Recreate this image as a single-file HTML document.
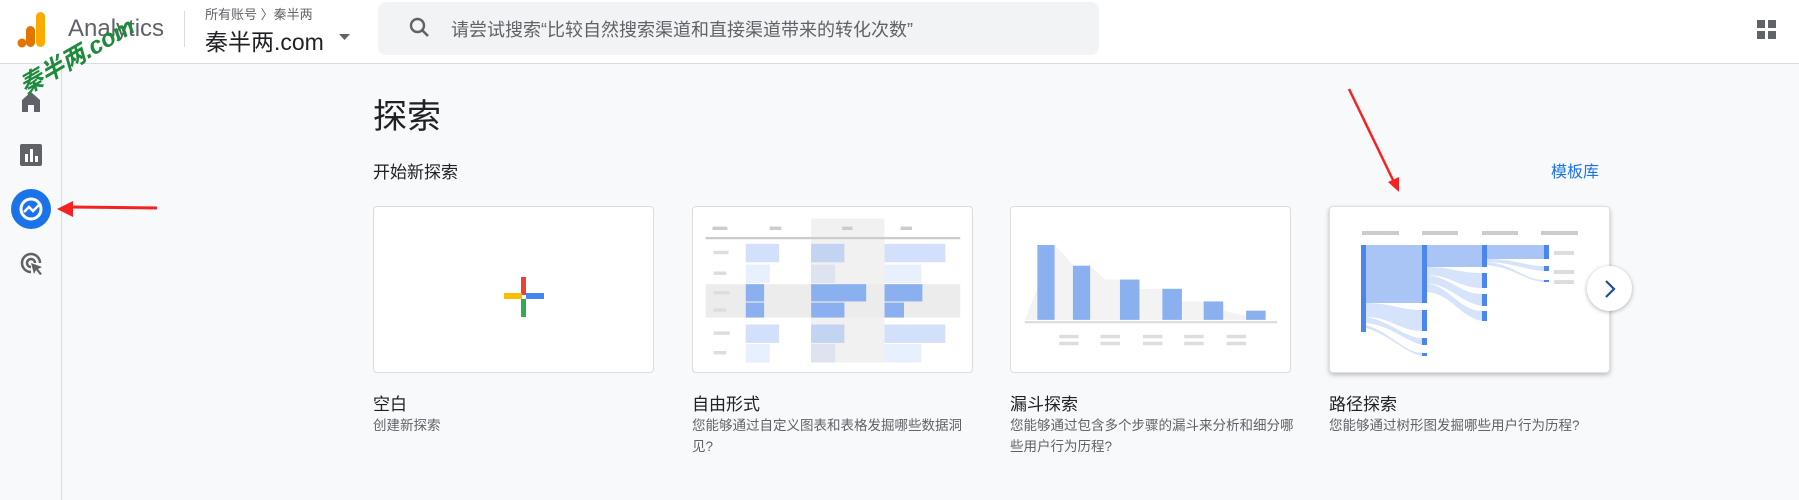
<!DOCTYPE html>
<html><head><meta charset="utf-8"><style>
*{margin:0;padding:0;box-sizing:border-box}
body{width:1799px;height:500px;overflow:hidden;background:#f8f9fa;font-family:"Liberation Sans","Noto Sans CJK SC",sans-serif;position:relative;color:#202124}
.hdr{position:absolute;left:0;top:0;width:1799px;height:64px;background:#fff;border-bottom:1px solid #dadce0}
.side{position:absolute;left:0;top:64px;width:62px;height:436px;border-right:1px solid #dadce0;background:#f8f9fa}
.abs{position:absolute;white-space:nowrap}
.card{position:absolute;top:206px;width:281px;height:167px;background:#fff;border:1px solid #dadce0;border-radius:4px;overflow:hidden}
.ct{position:absolute;top:390px;font-size:17px;color:#202124}
.cd{position:absolute;top:415px;font-size:13.5px;color:#5f6368;line-height:21px;width:290px}
</style></head><body>
<div class="hdr">
<svg class="abs" style="left:17px;top:12px" width="30" height="36" viewBox="0 0 30 36"><rect x="19" y="0" width="9" height="35" rx="4.5" fill="#f9ab00"/><rect x="9" y="14" width="9" height="21" rx="4.5" fill="#e37400"/><circle cx="5" cy="31" r="4.5" fill="#e37400"/></svg>
<div class="abs" style="left:68px;top:15px;font-size:24px;color:#5f6368">Analytics</div>
<div class="abs" style="left:184px;top:11px;width:1px;height:36px;background:#dadce0"></div>
<div class="abs" style="left:205px;top:4px;font-size:13px;color:#5f6368">所有账号 〉秦半两</div>
<div class="abs" style="left:205px;top:23px;font-size:23px;color:#202124">秦半两.com</div>
<svg class="abs" style="left:339px;top:34px" width="12" height="7"><path d="M0 0h11l-5.5 6z" fill="#5f6368"/></svg>
<div class="abs" style="left:378px;top:2px;width:721px;height:53px;background:#f1f3f4;border-radius:8px"></div>
<svg class="abs" style="left:408px;top:16px" width="24" height="24" viewBox="0 0 24 24"><circle cx="9.5" cy="9.5" r="6.5" stroke="#5f6368" stroke-width="2.4" fill="none"/><path d="M14 14l6 6" stroke="#5f6368" stroke-width="2.6"/></svg>
<div class="abs" style="left:451px;top:16px;font-size:18px;color:#5f6368">请尝试搜索“比较自然搜索渠道和直接渠道带来的转化次数”</div>
<svg class="abs" style="left:1757px;top:20px" width="19" height="19"><g fill="#5f6368"><rect width="8" height="8"/><rect x="11" width="8" height="8"/><rect y="11" width="8" height="8"/><rect x="11" y="11" width="8" height="8"/></g></svg>
</div>
<div class="side"></div>
<svg class="abs" style="left:21px;top:91px" width="20" height="22" viewBox="0 0 20 22"><path d="M10 1L1 9v12h6v-7h6v7h6V9z" fill="#5f6368"/></svg>
<svg class="abs" style="left:20px;top:144px" width="22" height="22"><rect width="22" height="22" rx="2" fill="#5f6368"/><rect x="5" y="10" width="3" height="8" fill="#fff"/><rect x="10" y="5" width="3" height="13" fill="#fff"/><rect x="15" y="12" width="3" height="6" fill="#fff"/></svg>
<svg class="abs" style="left:10px;top:188px" width="42" height="42" viewBox="0 0 42 42"><circle cx="21" cy="21" r="20" fill="#1a73e8"/><circle cx="21" cy="21" r="10" fill="none" stroke="#fff" stroke-width="3"/><path d="M14 24l5-5 4 4 6-6" stroke="#fff" stroke-width="2.5" fill="none"/></svg>
<svg class="abs" style="left:20px;top:252px" width="24" height="24" viewBox="0 0 24 24"><path d="M11 20a9 9 0 1 1 9-9" stroke="#5f6368" stroke-width="2.5" fill="none"/><path d="M11 15a4 4 0 1 1 4-4" stroke="#5f6368" stroke-width="2.5" fill="none"/><path d="M11 11l11 4-4 2 4 5-2 1-4-5-2 4z" fill="#5f6368"/></svg>
<div class="abs" style="left:22px;top:75px;font-size:24px;line-height:28px;font-weight:bold;color:#1e8a3c;transform:rotate(-30deg);transform-origin:0 50%;font-style:italic">秦半两.com</div>
<svg class="abs" style="left:0;top:0" width="1799" height="500"><path d="M157 208L70 207" stroke="#f52222" stroke-width="3"/><path d="M57 209l16-8v16z" fill="#f52222"/><path d="M1349 89L1393 180" stroke="#f52222" stroke-width="2.5"/><path d="M1399 192l-11-10 11-5z" fill="#f52222"/></svg>
<div class="abs" style="left:373px;top:89px;font-size:34px">探索</div>
<div class="abs" style="left:373px;top:158px;font-size:17px">开始新探索</div>
<div class="abs" style="left:1551px;top:158px;font-size:16px;color:#1a73e8">模板库</div>
<div class="card" style="left:373px"><svg class="abs" style="left:130px;top:70px" width="40" height="40"><rect x="17" y="0" width="5" height="18" fill="#ea4335"/><rect x="0" y="16" width="18" height="6" fill="#fbbc04"/><rect x="22" y="16" width="18" height="6" fill="#4285f4"/><rect x="17" y="22" width="5" height="18" fill="#34a853"/></svg></div>
<div class="card" style="left:692px"><svg width="281" height="167" viewBox="0 0 245 145" preserveAspectRatio="none">
<rect x="103" y="10" width="64" height="125" fill="#f1f1f1"/>
<g fill="#ccc"><rect x="17" y="17" width="13" height="3"/><rect x="67" y="17" width="10" height="3"/><rect x="130" y="17" width="9" height="3"/><rect x="181" y="17" width="10" height="3"/></g>
<rect x="11" y="26" width="222" height="2" fill="#ccc"/>
<rect x="11" y="67" width="222" height="29" fill="#ececec"/>
<g fill="#d2e0fb"><rect x="46" y="32" width="29" height="16"/><rect x="167" y="32" width="53" height="16"/><rect x="46" y="102" width="29" height="16"/><rect x="167" y="102" width="53" height="16"/></g>
<g fill="#c3d3f2"><rect x="103" y="32" width="29" height="16"/><rect x="103" y="102" width="29" height="16"/></g>
<g fill="#e8effd"><rect x="46" y="50" width="21" height="16"/><rect x="167" y="50" width="32" height="16"/><rect x="46" y="119" width="21" height="16"/><rect x="167" y="119" width="32" height="16"/></g>
<g fill="#dde4f0"><rect x="103" y="50" width="21" height="16"/><rect x="103" y="119" width="21" height="16"/></g>
<g fill="#8ab0f0"><rect x="46" y="67" width="16" height="15"/><rect x="103" y="67" width="48" height="15"/><rect x="167" y="67" width="33" height="15"/><rect x="46" y="83" width="16" height="13"/><rect x="103" y="83" width="29" height="13"/><rect x="167" y="83" width="17" height="13"/></g>
<g fill="#ddd"><rect x="18" y="38" width="13" height="3"/><rect x="18" y="56" width="11" height="3"/><rect x="18" y="73" width="14" height="3"/><rect x="18" y="88" width="11" height="3"/><rect x="18" y="108" width="14" height="3"/><rect x="18" y="125" width="11" height="3"/></g>
</svg></div>
<div class="card" style="left:1010px"><svg width="281" height="167" viewBox="0 0 245 145" preserveAspectRatio="none">
<path d="M38 33L55 51L69 51L82 63L94 63L108 71L131 71L149 82L168 82L185 90L220 98L12 98Z" fill="#f3f3f3"/>
<g fill="#8ab0f0"><rect x="23" y="33" width="15" height="65"/><rect x="54" y="51" width="15" height="47"/><rect x="95" y="63" width="17" height="35"/><rect x="132" y="71" width="17" height="27"/><rect x="168" y="82" width="17" height="16"/><rect x="205" y="90" width="17" height="8"/></g>
<rect x="12" y="99" width="220" height="2" fill="#ddd"/>
<g fill="#ddd"><rect x="42" y="111" width="17" height="3"/><rect x="78" y="111" width="17" height="3"/><rect x="115" y="111" width="17" height="3"/><rect x="151" y="111" width="17" height="3"/><rect x="188" y="111" width="17" height="3"/><rect x="42" y="117" width="17" height="3"/><rect x="78" y="117" width="17" height="3"/><rect x="115" y="117" width="17" height="3"/><rect x="151" y="117" width="17" height="3"/><rect x="188" y="117" width="17" height="3"/></g>
</svg></div>
<div class="card" style="left:1329px;box-shadow:0 2px 5px rgba(0,0,0,.25);border-color:#e0e0e0"><svg width="281" height="167" viewBox="0 0 281 167">
<g fill="#ccc"><rect x="32" y="24" width="37" height="4"/><rect x="92" y="24" width="36" height="4"/><rect x="152" y="24" width="36" height="4"/><rect x="211" y="24" width="37" height="4"/></g>
<rect x="36" y="38" width="56" height="58" fill="#a8c5f5"/>
<rect x="97" y="38" width="55" height="22" fill="#a8c5f5"/>
<rect x="157" y="38" width="57" height="14" fill="#a8c5f5"/>
<g fill="#d5e3fb"><path d="M36 96C60 96 70 103 92 103V124C70 124 60 110 36 110Z"/><path d="M36 110C60 114 75 131 92 131V138C75 134 60 118 36 116Z"/><path d="M36 118C60 125 75 146 92 146V149C75 146 60 128 36 121Z"/><path d="M97 60C120 60 130 66 152 66V81C130 81 120 68 97 68Z"/><path d="M97 68C120 70 130 87 152 87V99C130 95 120 78 97 76Z"/><path d="M97 76C120 80 130 104 152 104V114C130 110 120 86 97 85Z"/><path d="M157 52C185 52 195 59 214 59V64C195 63 185 56 157 55Z"/><path d="M157 55C185 58 195 73 214 73V75C195 74 185 61 157 58Z"/></g>
<g fill="#4a86ee"><rect x="31" y="38" width="5" height="87"/><rect x="92" y="38" width="5" height="58"/><rect x="92" y="103" width="5" height="21"/><rect x="92" y="131" width="5" height="7"/><rect x="92" y="146" width="5" height="3"/><rect x="152" y="38" width="5" height="22"/><rect x="152" y="66" width="5" height="15"/><rect x="152" y="87" width="5" height="12"/><rect x="152" y="104" width="5" height="10"/><rect x="214" y="38" width="5" height="14"/><rect x="214" y="59" width="5" height="5"/><rect x="214" y="73" width="5" height="2"/></g>
<g fill="#ddd"><rect x="224" y="44" width="20" height="4"/><rect x="224" y="63" width="20" height="4"/><rect x="224" y="73" width="20" height="4"/></g>
</svg></div>
<div class="abs" style="left:1587px;top:266px;width:45px;height:45px;border-radius:50%;background:#fff;box-shadow:0 1px 4px rgba(0,0,0,.3)"><svg class="abs" style="left:17px;top:14px" width="12" height="18"><path d="M2 1l8 8-8 8" stroke="#1a4fa0" stroke-width="2.2" fill="none"/></svg></div>
<div class="ct" style="left:373px">空白</div><div class="cd" style="left:373px">创建新探索</div>
<div class="ct" style="left:692px">自由形式</div><div class="cd" style="left:692px;white-space:normal">您能够通过自定义图表和表格发掘哪些数据洞见?</div>
<div class="ct" style="left:1010px">漏斗探索</div><div class="cd" style="left:1010px;white-space:normal">您能够通过包含多个步骤的漏斗来分析和细分哪些用户行为历程?</div>
<div class="ct" style="left:1329px">路径探索</div><div class="cd" style="left:1329px">您能够通过树形图发掘哪些用户行为历程?</div>
</body></html>
